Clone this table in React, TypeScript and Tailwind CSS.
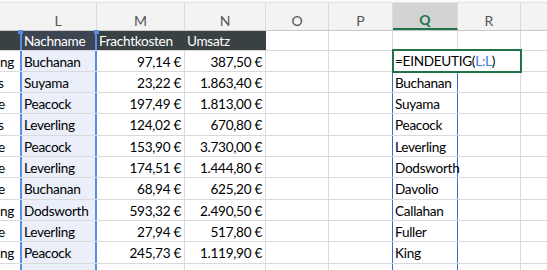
import React from 'react';

type Row = {
  k: string;
  kShift: string;
  name: string;
  fracht: string;
  umsatz: string;
  q?: string;
  h: string;
};

const rows: Row[] = [
  { k: 'ng', kShift: 'ml-0', name: 'Buchanan', fracht: '97,14 €', umsatz: '387,50 €', h: 'h-[21px]' },
  { k: 's', kShift: 'ml-[-2px]', name: 'Suyama', fracht: '23,22 €', umsatz: '1.863,40 €', q: 'Buchanan', h: 'h-[21px]' },
  { k: 'e', kShift: 'ml-[-2px]', name: 'Peacock', fracht: '197,49 €', umsatz: '1.813,00 €', q: 'Suyama', h: 'h-[21px]' },
  { k: 's', kShift: 'ml-[-2px]', name: 'Leverling', fracht: '124,02 €', umsatz: '670,80 €', q: 'Peacock', h: 'h-[22px]' },
  { k: 'e', kShift: 'ml-[-2px]', name: 'Peacock', fracht: '153,90 €', umsatz: '3.730,00 €', q: 'Leverling', h: 'h-[21px]' },
  { k: 'e', kShift: 'ml-[-2px]', name: 'Leverling', fracht: '174,51 €', umsatz: '1.444,80 €', q: 'Dodsworth', h: 'h-[21px]' },
  { k: 'e', kShift: 'ml-[-2px]', name: 'Buchanan', fracht: '68,94 €', umsatz: '625,20 €', q: 'Davolio', h: 'h-[22px]' },
  { k: 'ng', kShift: 'ml-0', name: 'Dodsworth', fracht: '593,32 €', umsatz: '2.490,50 €', q: 'Callahan', h: 'h-[21px]' },
  { k: 'e', kShift: 'ml-[-2px]', name: 'Leverling', fracht: '27,94 €', umsatz: '517,80 €', q: 'Fuller', h: 'h-[21px]' },
  { k: 'ng', kShift: 'ml-0', name: 'Peacock', fracht: '245,73 €', umsatz: '1.119,90 €', q: 'King', h: 'h-[22px]' },
  { k: 'e', kShift: 'ml-[-2px]', name: 'Davolio', fracht: '481,50 €', umsatz: '2.818,60 €', q: '', h: 'h-[22px]' },
];

const grid = 'border-[#d9d9d9]';
const blue = 'border-[#5b8be6]';

function Letter({ w, children, active }: { w: string; children?: React.ReactNode; active?: boolean }) {
  return (
    <div
      className={`${w} shrink-0 h-full flex items-center justify-center pt-[7px] border-r border-[#dcdcdc] ${
        active ? 'bg-[#d3d3d3] border-b-2 border-b-[#217346] text-[#217346] font-bold' : 'text-[#555]'
      }`}
    >
      {children}
    </div>
  );
}

export default function App() {
  return (
    <div
      className="relative w-[547px] h-[270px] overflow-hidden bg-white text-[13.6px] tracking-[-0.3px] text-black"
      style={{ fontFamily: 'Lato, "Open Sans", sans-serif' }}
    >
      <div className="h-[3px] bg-[#fafafa] border-b border-[#e4e4e4]" />

      {/* column letters */}
      <div className="h-[28px] flex bg-[#f3f3f3] border-b border-[#c9c9c9] text-[14px] tracking-normal">
        <Letter w="w-[20px] border-r-0" />
        <Letter w="w-[77px]">L</Letter>
        <Letter w="w-[88px]">M</Letter>
        <Letter w="w-[81px]">N</Letter>
        <Letter w="w-[63px]">O</Letter>
        <Letter w="w-[64px]">P</Letter>
        <Letter w="w-[65px]" active>Q</Letter>
        <Letter w="w-[63px]">R</Letter>
        <div className="flex-1" />
      </div>

      {/* table header */}
      <div className={`h-[20px] flex border-b ${grid}`}>
        <div className="w-[20px] shrink-0 bg-[#3a4142]" />
        <div className={`w-[77px] shrink-0 bg-[#3d4552] border-x-2 ${blue} text-white pl-[2px] leading-[20px]`}>Nachname</div>
        <div className="w-[88px] shrink-0 bg-[#3a4142] text-white pl-[2px] leading-[20px]">Frachtkosten</div>
        <div className="w-[81px] shrink-0 bg-[#3a4142] text-white pl-[2px] leading-[20px] border-r border-[#3a4142]">Umsatz</div>
        <div className={`w-[63px] shrink-0 border-r ${grid}`} />
        <div className={`w-[64px] shrink-0 border-r ${grid}`} />
        <div className={`w-[65px] shrink-0 border-r ${grid}`} />
        <div className={`w-[63px] shrink-0 border-r ${grid}`} />
        <div className="flex-1" />
      </div>

      {rows.map((r, i) => {
        const spill = i > 0;
        return (
          <div key={i} className={`${r.h} flex border-b ${grid} leading-[22px]`}>
            <div className="w-[20px] shrink-0 overflow-hidden whitespace-nowrap">
              <span className={`inline-block ${r.kShift}`}>{r.k}</span>
            </div>
            <div className={`w-[77px] shrink-0 bg-[#eaeff9] border-x-2 ${blue} pl-[2px] whitespace-nowrap`}>{r.name}</div>
            <div className={`w-[88px] shrink-0 border-r ${grid} text-right pr-[3px] whitespace-nowrap`}>{r.fracht}</div>
            <div className={`w-[81px] shrink-0 border-r ${grid} text-right pr-[3px] whitespace-nowrap`}>{r.umsatz}</div>
            <div className={`w-[63px] shrink-0 border-r ${grid}`} />
            <div className={`w-[64px] shrink-0 border-r ${spill ? 'border-[#2f6fd6]' : grid}`} />
            <div className={`relative w-[65px] shrink-0 border-r ${spill ? 'border-[#2f6fd6]' : grid} pl-[2px] whitespace-nowrap`}>
              {r.q}
              {i === 0 && (
                <div className="absolute left-[-1px] top-[-2px] w-[130px] h-[24px] border-2 border-[#217346] bg-white pl-[1px] leading-[21px] z-10">
                  =EINDEUTIG(<span className="text-[#3c78d8]">L:L</span>)
                </div>
              )}
            </div>
            <div className={`w-[63px] shrink-0 border-r ${grid}`} />
            <div className="flex-1" />
          </div>
        );
      })}

      {/* selection handles on column L */}
      <div className="absolute left-[18px] top-[30px] w-[5px] h-[4px] bg-[#5b8be6]" />
      <div className="absolute left-[94px] top-[30px] w-[5px] h-[4px] bg-[#5b8be6]" />
    </div>
  );
}
